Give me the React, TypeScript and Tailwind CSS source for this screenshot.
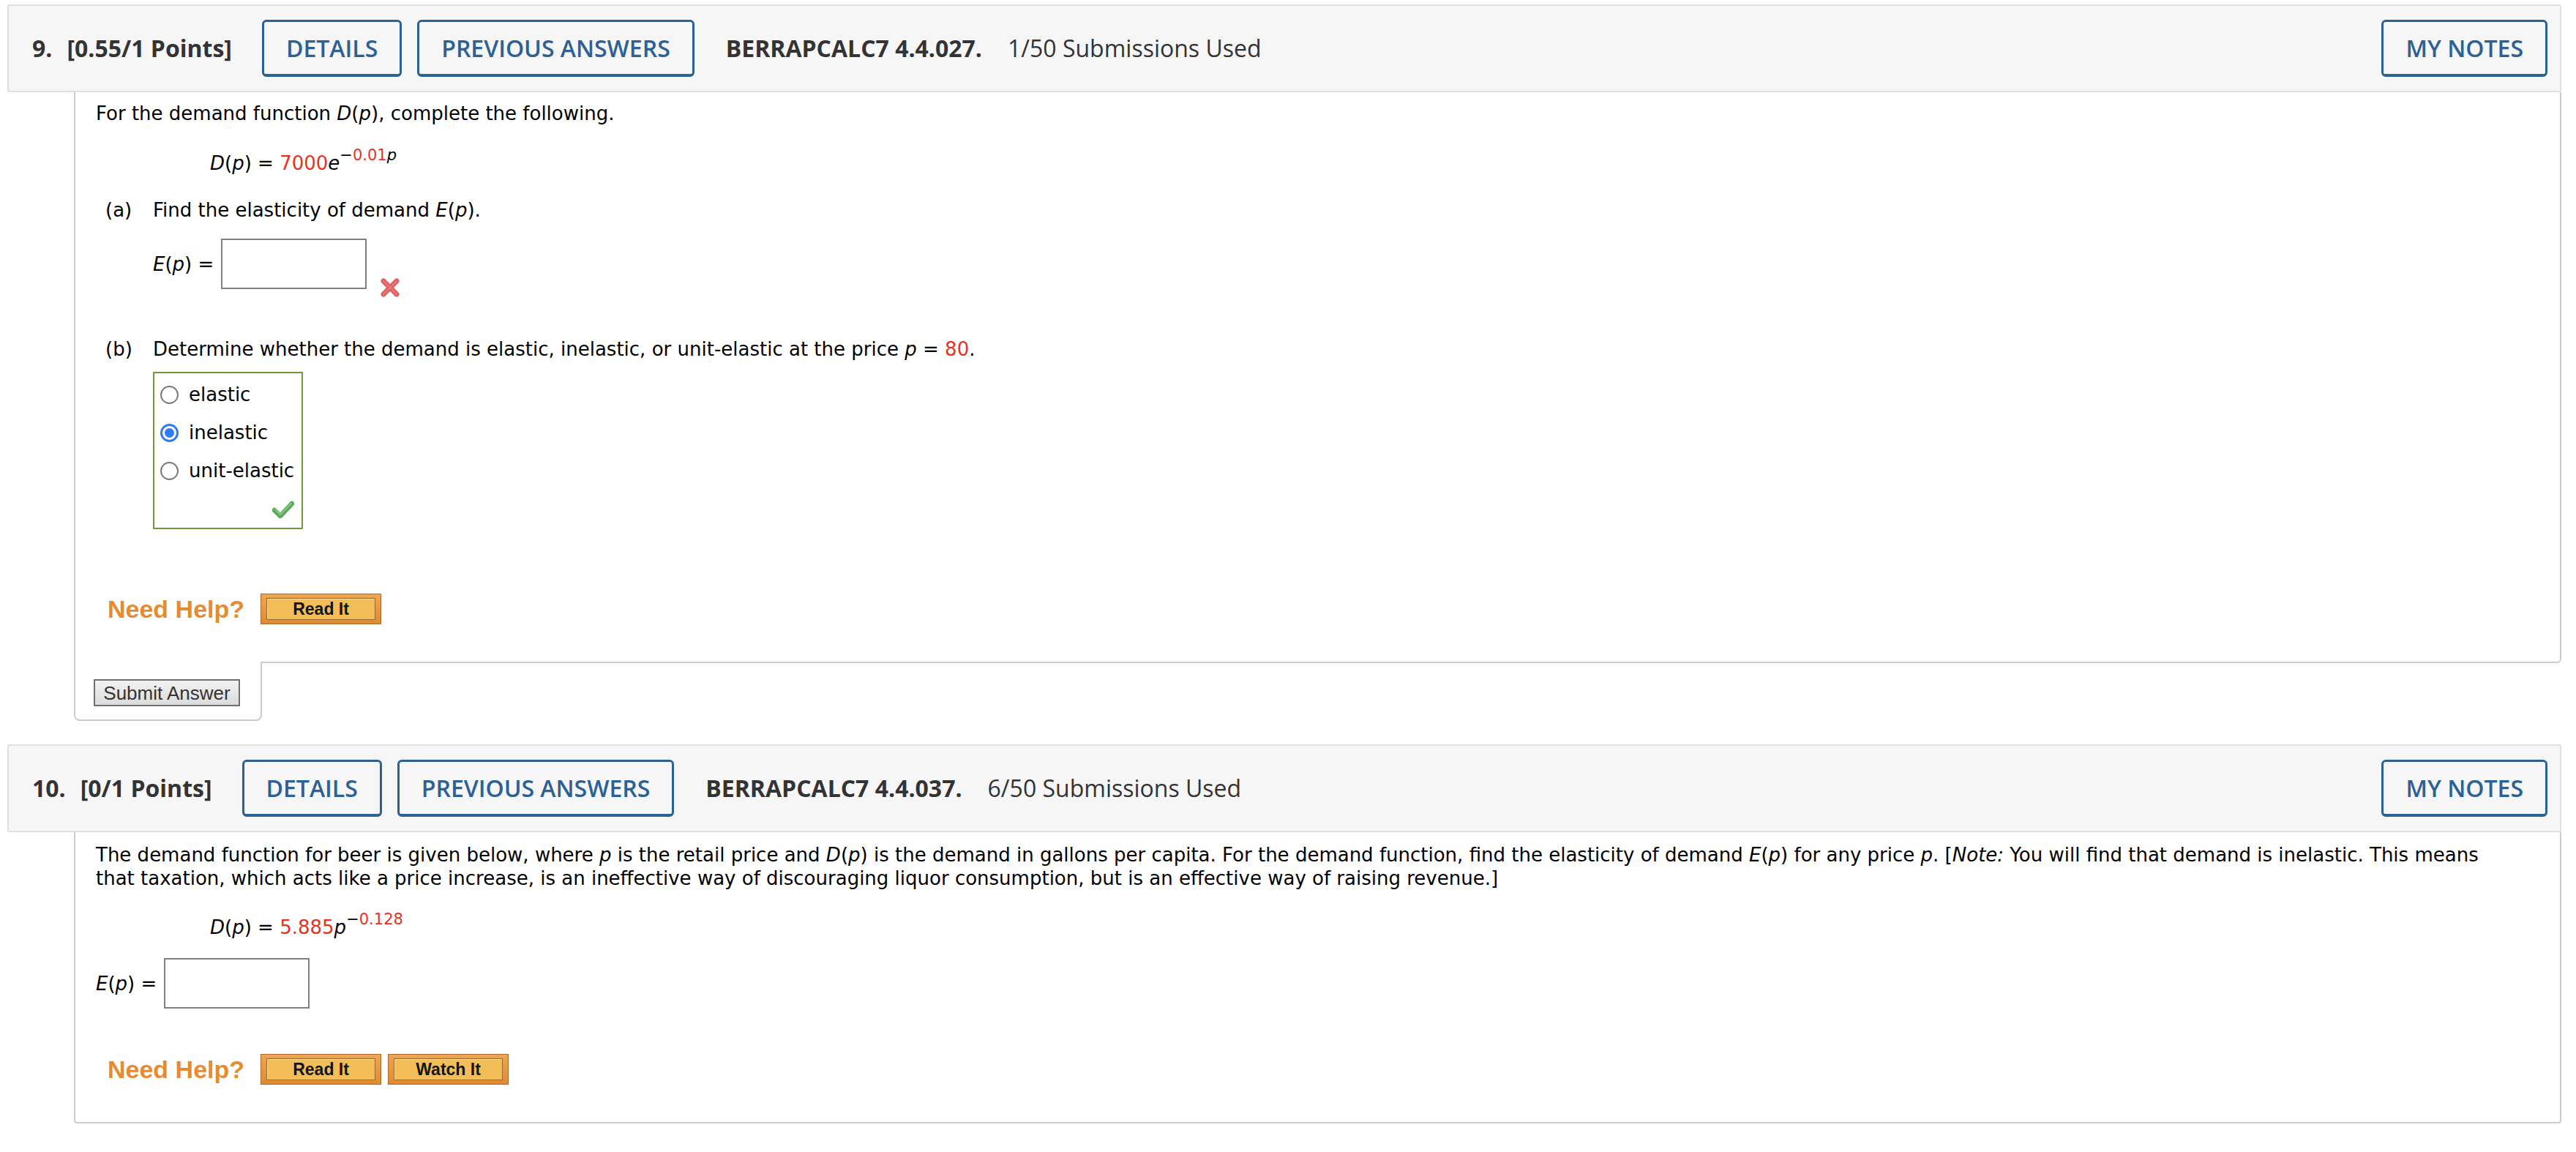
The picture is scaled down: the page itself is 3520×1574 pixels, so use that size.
import React from "react";

// small pieces used by both questions

function HeaderButton({ children, className = "" }: { children: React.ReactNode; className?: string }) {
  return (
    <span
      className={`flex h-[78px] items-center rounded-[6px] border-[3px] border-b-[4px] border-[#2b6195] px-[30px] font-semibold text-[#2b6195] ${className}`}
    >
      {children}
    </span>
  );
}

function QuestionHeader({ num, points, code, subs, numGap }: { num: string; points: string; code: string; subs: string; numGap: string }) {
  return (
    <div className="flex h-[120px] items-center rounded-[3px] border-2 border-[#e0e0e0] bg-[#f6f6f6] pl-[32px] pr-[17px] font-['Open_Sans',sans-serif] text-[32px] text-[#333]">
      <span className="font-bold">{num}</span>
      <span className={`${numGap} font-bold`}>[{points} Points]</span>
      <HeaderButton className="ml-[41px]">DETAILS</HeaderButton>
      <HeaderButton className="ml-[21px]">PREVIOUS ANSWERS</HeaderButton>
      <span className="ml-[43px] font-bold">{code}</span>
      <span className="ml-[35px]">{subs}</span>
      <HeaderButton className="ml-auto px-[30px]">MY NOTES</HeaderButton>
    </div>
  );
}

function HelpButton({ label }: { label: string }) {
  return (
    <span className="flex h-[42px] w-[165px] border border-[#a8692a] bg-gradient-to-b from-[#f1a54e] to-[#df8b34] px-[7px] py-[5px]">
      <span className="flex flex-1 items-center justify-center border border-[#9a6a2c] bg-[#f3bd57] font-['Liberation_Sans',Arial,sans-serif] text-[23px] font-bold text-[#151515] shadow-[inset_1px_1px_0_#fbe0a0]">
        {label}
      </span>
    </span>
  );
}

function NeedHelp({ buttons }: { buttons: string[] }) {
  return (
    <div className="flex items-center pl-[16px]">
      <span className="mr-[22px] font-['Liberation_Sans',Arial,sans-serif] text-[34px] leading-none font-bold text-[#e88a30]">
        Need Help?
      </span>
      <div className="flex gap-[9px]">
        {buttons.map((b) => (
          <HelpButton key={b} label={b} />
        ))}
      </div>
    </div>
  );
}

function AnswerBox() {
  return <div className="ml-[10px] h-[69px] w-[199px] shrink-0 border-2 border-[#808080] bg-white" />;
}

function WrongMark() {
  return (
    <svg width="28" height="26" viewBox="0 0 28 26" className="ml-[18px] mt-[54px] shrink-0">
      <path d="M5 4 L23 22 M23 4 L5 22" stroke="#e06060" strokeWidth="7" strokeLinecap="round" />
      <path d="M5 4 L23 22 M23 4 L5 22" stroke="#ee8a8a" strokeWidth="2" strokeLinecap="round" opacity="0.6" />
    </svg>
  );
}

function RightMark() {
  return (
    <svg width="30" height="24" viewBox="0 0 30 24">
      <path d="M3 13 L11 21 L27 4" fill="none" stroke="#5aa95a" strokeWidth="6.5" strokeLinecap="round" strokeLinejoin="round" />
      <path d="M4 12 L11 19 L26 4" fill="none" stroke="#86c986" strokeWidth="2" strokeLinecap="round" strokeLinejoin="round" />
    </svg>
  );
}

function Radio({ checked }: { checked?: boolean }) {
  if (checked) {
    return (
      <span className="flex h-[25px] w-[25px] shrink-0 items-center justify-center rounded-full border-[3px] border-[#2f7bf5]">
        <span className="h-[13px] w-[13px] rounded-full bg-[#2f7bf5]" />
      </span>
    );
  }
  return <span className="h-[25px] w-[25px] shrink-0 rounded-full border-2 border-[#7a7a7a]" />;
}

const options = [
  { label: "elastic", checked: false },
  { label: "inelastic", checked: true },
  { label: "unit-elastic", checked: false },
];

export default function App() {
  return (
    <div className="min-h-screen bg-white pt-[6px] pl-[10px] pr-[20px]">
      {/* question 9 */}
      <QuestionHeader num="9." points="0.55/1" code="BERRAPCALC7 4.4.027." subs="1/50 Submissions Used" numGap="ml-[20px]" />
      <div className="ml-[91px] rounded-br-[6px] border-x-2 border-b-2 border-[#cbcbcb] px-[28px] pt-[13px] pb-[51px] font-['DejaVu_Sans',Verdana,sans-serif] text-[26px] leading-[32px] text-black">
        <p>
          For the demand function <i>D</i>(<i>p</i>), complete the following.
        </p>
        <p className="mt-[36px] pl-[156px]">
          <i>D</i>(<i>p</i>) = <span className="text-[#e8321f]">7000</span>
          <i>e</i>
          <span className="relative -top-[13px] text-[21px]">
            −<span className="text-[#e8321f]">0.01</span>
            <i>p</i>
          </span>
        </p>

        <div className="mt-[30px] flex pl-[13px]">
          <span className="w-[65px] shrink-0">(a)</span>
          <div>
            <p>
              Find the elasticity of demand <i>E</i>(<i>p</i>).
            </p>
            <div className="mt-[23px] flex items-start">
              <span className="mt-[19px]">
                <i>E</i>(<i>p</i>) =
              </span>
              <AnswerBox />
              <WrongMark />
            </div>
          </div>
        </div>

        <div className="mt-[55px] flex pl-[13px]">
          <span className="w-[65px] shrink-0">(b)</span>
          <div>
            <p>
              Determine whether the demand is elastic, inelastic, or unit-elastic at the price <i>p</i> ={" "}
              <span className="text-[#e8321f]">80</span>.
            </p>
            <div className="mt-[15px] w-[205px] border-2 border-[#6b9b3f] px-[8px] pt-[3px]">
              {options.map((o) => (
                <div key={o.label} className="flex h-[52px] items-center gap-[14px]">
                  <Radio checked={o.checked} />
                  <span>{o.label}</span>
                </div>
              ))}
              <div className="flex justify-end pt-[15px] pr-[2px] pb-[13px]">
                <RightMark />
              </div>
            </div>
          </div>
        </div>

        <div className="mt-[88px]">
          <NeedHelp buttons={["Read It"]} />
        </div>
      </div>
      <div className="relative ml-[91px] -mt-[2px] h-[81px] w-[257px] rounded-b-[8px] border-x-2 border-b-2 border-[#cbcbcb] bg-white pl-[25px] pt-[24px]">
        <button className="h-[37px] w-[200px] border-2 border-[#6f6f6f] bg-gradient-to-b from-[#f2f2f2] to-[#dcdcdc] font-['Liberation_Sans',Arial,sans-serif] text-[26px] leading-none text-[#333]">
          Submit Answer
        </button>
      </div>

      {/* question 10 */}
      <div className="mt-[32px]">
        <QuestionHeader num="10." points="0/1" code="BERRAPCALC7 4.4.037." subs="6/50 Submissions Used" numGap="ml-[20px]" />
      </div>
      <div className="ml-[91px] rounded-b-[4px] border-x-2 border-b-2 border-[#cbcbcb] pl-[28px] pr-[64px] pt-[15px] pb-[51px] font-['DejaVu_Sans',Verdana,sans-serif] text-[26px] leading-[32px] text-black">
        <p>
          The demand function for beer is given below, where <i>p</i> is the retail price and <i>D</i>(<i>p</i>) is the demand
          in gallons per capita. For the demand function, find the elasticity of demand <i>E</i>(<i>p</i>) for any price{" "}
          <i>p</i>. [<i>Note:</i> You will find that demand is inelastic. This means that taxation, which acts like a price
          increase, is an ineffective way of discouraging liquor consumption, but is an effective way of raising revenue.]
        </p>
        <p className="mt-[35px] pl-[156px]">
          <i>D</i>(<i>p</i>) = <span className="text-[#e8321f]">5.885</span>
          <i>p</i>
          <span className="relative -top-[13px] text-[21px]">
            −<span className="text-[#e8321f]">0.128</span>
          </span>
        </p>
        <div className="mt-[24px] flex items-center">
          <span>
            <i>E</i>(<i>p</i>) =
          </span>
          <AnswerBox />
        </div>
        <div className="mt-[62px]">
          <NeedHelp buttons={["Read It", "Watch It"]} />
        </div>
      </div>
    </div>
  );
}
